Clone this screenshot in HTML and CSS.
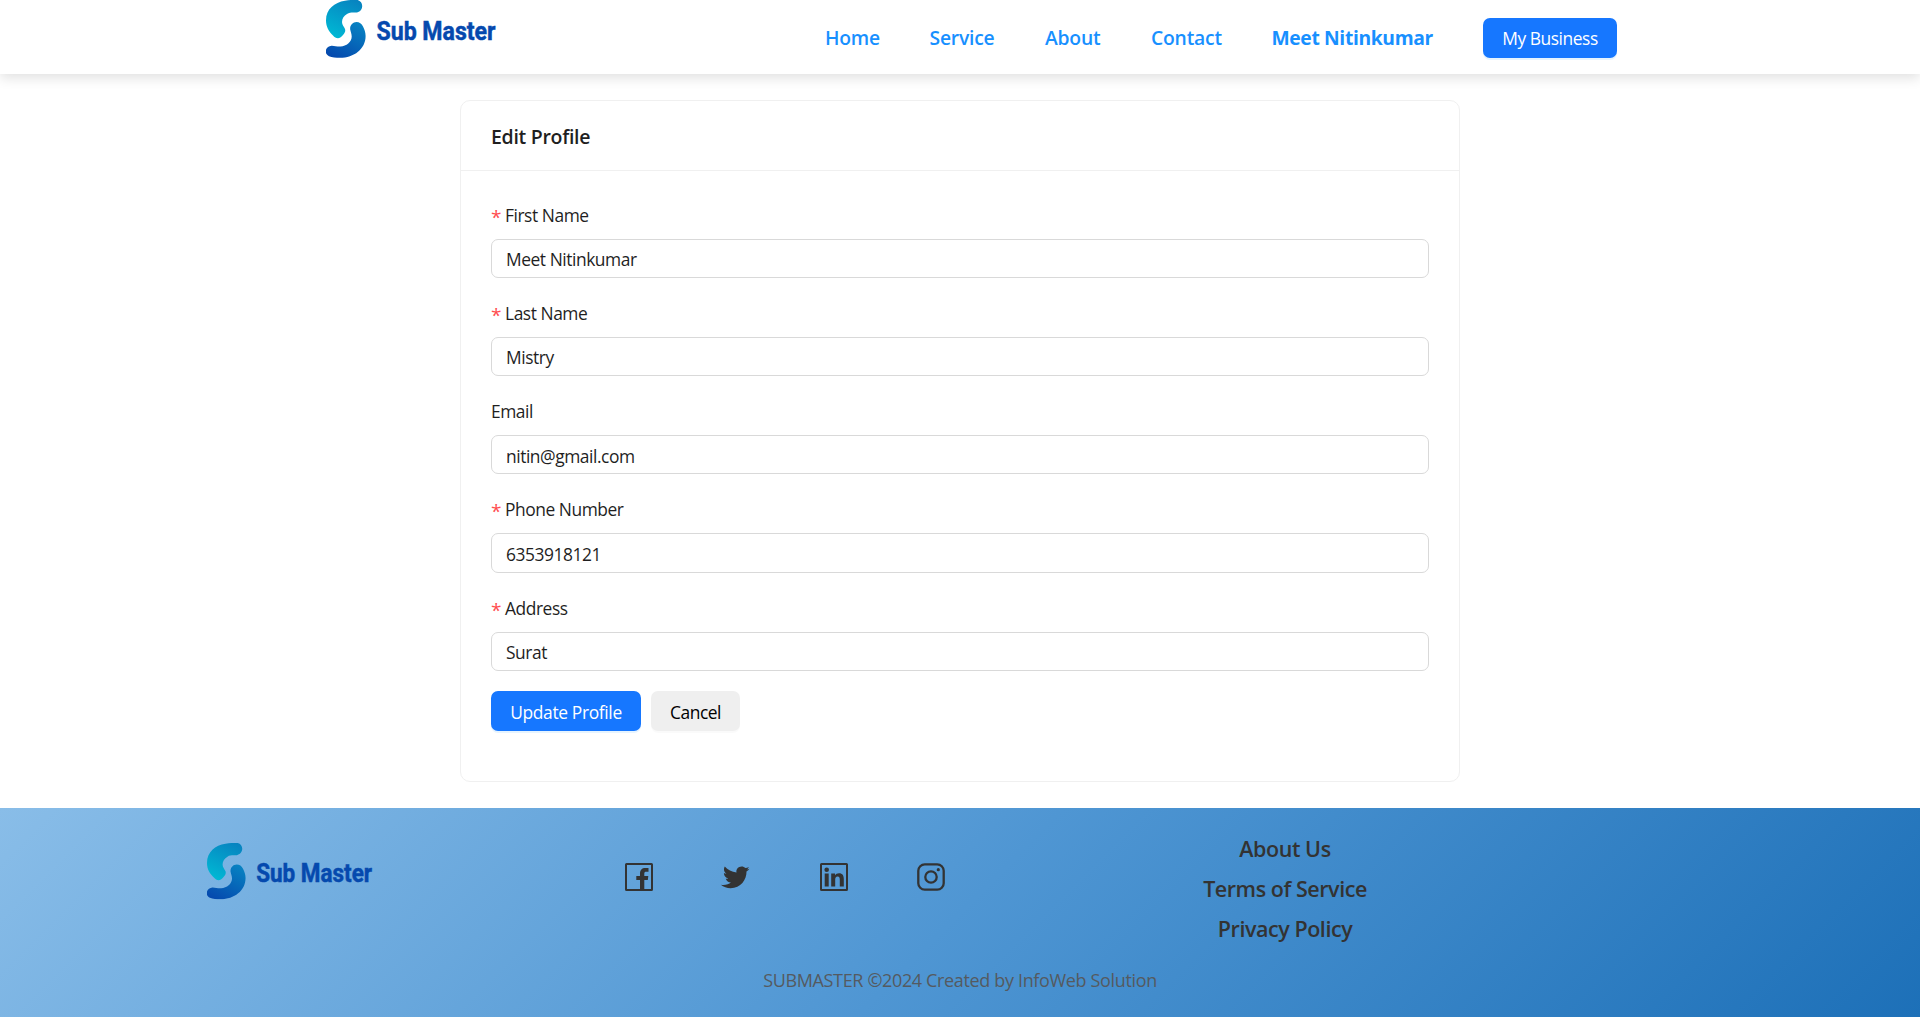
FILE: index.html
```
<!DOCTYPE html>
<html lang="en">
<head>
<meta charset="utf-8">
<title>Sub Master - Edit Profile</title>
<link rel="stylesheet" href="styles.css">
</head>
<body>
<svg class="defs" width="0" height="0" aria-hidden="true">
  <defs>
    <linearGradient id="logo-top" x1="0.75" y1="0" x2="0.3" y2="1"><stop offset="0" stop-color="#0784c0"/><stop offset="1" stop-color="#00b8d4"/></linearGradient>
    <linearGradient id="logo-bottom" x1="0.8" y1="0" x2="0.2" y2="1"><stop offset="0" stop-color="#0782c2"/><stop offset="1" stop-color="#0549ae"/></linearGradient>
    <symbol id="logo" viewBox="0 0 172 58">
      <path fill="url(#logo-top)" d="M19 .8C23 0 27-.2 30-.2 34-.2 36.200 3 36.200 6c0 3.500-2.500 6-5.500 6.500C27 12.800 24 12 21 14c-3 1.800-5 4.500-5 8 0 3 2 4.500 3 7 .8 2.500-.5 4-2 6-2 2.500-3.500 3.200-5 3.200-2 0-3.500-1-5-2.700C3 31.500 0 27 0 20.500 0 9 8.500 2.500 19 .8z"/>
      <path fill="url(#logo-bottom)" d="M30.500 22c3 0 5 1.500 6.500 4.500 1.500 3 2.600 6 2.600 9.500C39.600 49 28 57.800 14 57.800c-4 0-8-.3-11-1.600-2-1-3.300-2.700-3.300-4.700 0-3 2.500-5.600 5.800-5.800 3-.1 5.500 1 9 .8 6-.5 11-4.500 11.200-9.800 0-3-1-4.500-1.500-7.200-.5-4 2.500-7.500 6.300-7.500z"/>
      <text class="logo-text" x="50.500" y="40" textLength="119" lengthAdjust="spacingAndGlyphs">Sub Master</text>
    </symbol>
  </defs>
</svg>

<header class="header">
  <div class="header-inner">
    <svg class="header-logo" role="img" aria-label="Sub Master"><use href="#logo"/></svg>
    <nav class="nav">
      <a>Home</a><a>Service</a><a>About</a><a>Contact</a><a class="user">Meet Nitinkumar</a>
      <button class="btn btn-primary business">My Business</button>
    </nav>
  </div>
</header>

<main class="card">
  <h1 class="card-title">Edit Profile</h1>
  <form class="form">
    <div class="field"><label class="required">First Name</label><input type="text" value="Meet Nitinkumar"></div>
    <div class="field"><label class="required">Last Name</label><input type="text" value="Mistry"></div>
    <div class="field"><label>Email</label><input type="text" value="nitin@gmail.com"></div>
    <div class="field"><label class="required">Phone Number</label><input type="text" value="6353918121"></div>
    <div class="field"><label class="required">Address</label><input type="text" value="Surat"></div>
    <div class="actions">
      <button type="button" class="btn btn-primary update">Update Profile</button>
      <button type="button" class="btn btn-plain">Cancel</button>
    </div>
  </form>
</main>

<footer class="footer">
  <div class="footer-grid">
    <svg class="footer-logo" role="img" aria-label="Sub Master"><use href="#logo"/></svg>
    <div class="social">
      <svg viewBox="0 0 28 28"><rect x="1" y="1" width="26" height="26" rx=".5" fill="none" stroke="#333" stroke-width="2"/><path fill="#333" d="M15 26.500V17h-3.700v-4H15v-2.500C15 7 17 5 20.300 5H23.500v3.700h-2.200c-1.500 0-2 .6-2 2V13h4l-.5 4h-3.500v9.500z"/></svg>
      <svg viewBox="0 0 28 28"><path fill="#333" d="M27.500 5.800c-1 .5-1.900.7-2.900.8 1-.6 1.900-1.600 2.200-2.700-1 .6-2.200 1-3.300 1.200C22.500 4 21.100 3.400 19.600 3.400c-3.300 0-5.800 2.900-5.100 6C9.800 9.200 5.600 7 2.800 3.600c-1.600 2.700-.7 5.700 1.600 7.200-.9 0-1.800-.3-2.500-.7 0 2.700 1.800 4.900 4.300 5.500-.8.200-1.500.2-2.400.1.700 2.200 2.700 3.700 5.100 3.800-2.200 1.900-5.800 3-10.100 2.300 2.800 2.200 6.100 3.400 9.700 3.400 10.300 0 16.200-8.600 16-16.700 1.300-.7 2.200-1.600 3-2.700z"/></svg>
      <svg viewBox="0 0 28 28"><rect x="1" y="1" width="26" height="26" rx=".5" fill="none" stroke="#333" stroke-width="2"/><circle cx="6.700" cy="6.700" r="2.300" fill="#333"/><path fill="#333" d="M4.700 10.500h4v13h-4zM11.200 10.500H15v1.800c.8-1.300 2.200-2.100 4-2.100 3.600 0 4.800 2.200 4.800 5.900v7.400h-4v-6.700c0-1.800-.3-3.200-2.200-3.200s-2.400 1.400-2.400 3.100v6.800h-4z"/></svg>
      <svg viewBox="0 0 28 28" fill="none" stroke="#333" stroke-width="2.300"><rect x="1.300" y="1.300" width="25.400" height="25.400" rx="6.500"/><circle cx="14" cy="14" r="5.700"/><circle cx="21.300" cy="6.700" r="1.600" fill="#333" stroke="none"/></svg>
    </div>
    <div class="links"><a>About Us</a><a>Terms of Service</a><a>Privacy Policy</a></div>
  </div>
  <p class="copyright">SUBMASTER ©2024 Created by InfoWeb Solution</p>
</footer>
</body>
</html>
```
FILE: styles.css
```
* { box-sizing: border-box; }

body {
  margin: 0;
  min-height: 1017px;
  display: flex;
  flex-direction: column;
  background: #fff;
  color: #1f1f1f;
  font: 17.4px/1.5 "Open Sans", "Noto Sans", sans-serif;
  letter-spacing: -0.45px;
}

.defs { position: absolute; }

.logo-text {
  font: 700 26px Roboto, sans-serif;
  letter-spacing: 0;
  fill: #0549ae;
  stroke: #0549ae;
  stroke-width: 0.5px;
}

.header {
  height: 74px;
  flex: none;
  background: #fff;
  box-shadow: 0 4px 12px rgba(0, 0, 0, 0.12);
}

.header-inner {
  width: 1291px;
  height: 74px;
  margin: 0 auto 0 326px;
  display: flex;
  justify-content: space-between;
}

.header-logo { width: 172px; height: 58px; overflow: visible; }

.nav {
  display: grid;
  grid-template-columns: 54.5px 65.5px 56px 70.5px 161.5px 134px;
  column-gap: 50px;
  align-items: center;
  height: 76px;
}

.nav a {
  color: #1890ff;
  font-size: 19.3px;
  font-weight: 600;
  letter-spacing: -0.2px;
  white-space: nowrap;
}

.nav .user { font-weight: 700; letter-spacing: -0.36px; }

.btn {
  height: 40px;
  padding: 2px 0 0;
  border: 0;
  border-radius: 7px;
  font: inherit;
  letter-spacing: -0.45px;
  white-space: nowrap;
}

.business { padding-top: 0; }

.btn-primary {
  background: #1677ff;
  color: #fff;
  box-shadow: 0 2px 0 rgba(5, 145, 255, 0.1);
}

.btn-plain {
  width: 89px;
  background: #efefef;
  color: #000;
  box-shadow: 0 2px 0 rgba(0, 0, 0, 0.02);
}

.card {
  width: 1000px;
  height: 682px;
  margin: 26px auto;
  flex: none;
  border: 1px solid #f0f0f0;
  border-radius: 10px;
}

.card-title {
  height: 70px;
  margin: 0;
  padding: 0 30px;
  border-bottom: 1px solid #f0f0f0;
  font-size: 19.5px;
  font-weight: 600;
  line-height: 72px;
  letter-spacing: -0.3px;
}

.form { padding: 28.8px 30px 0; }

.field {
  height: 98.2px;
  display: flex;
  flex-direction: column;
  gap: 7px;
}

.field label { height: 32px; line-height: 31px; }

.required::before {
  content: "*";
  display: inline-block;
  width: 14px;
  height: 20px;
  color: #ff4d4f;
  font-size: 19px;
  line-height: 24px;
  vertical-align: -2px;
}

.field input {
  width: 100%;
  height: 39.2px;
  padding: 1.5px 14px 0;
  border: 1px solid #d9d9d9;
  border-radius: 7px;
  background: #fff;
  color: inherit;
  font: inherit;
  letter-spacing: inherit;
}

.actions { display: flex; gap: 10px; }
.update { width: 150px; letter-spacing: -0.35px; }

.footer {
  flex: 1;
  background: linear-gradient(135deg, #89bde8 0%, #4f96d3 50%, #1d70b8 100%);
}

.footer-grid {
  display: grid;
  grid-template-columns: 418px 306px 340px;
  padding: 21px 0 0 207px;
  height: 145px;
}

.footer-grid > .links { margin-left: 184px; }

.footer-logo { width: 167.5px; height: 56.5px; margin-top: 14px; overflow: visible; }

.social {
  width: 320px;
  padding-top: 34px;
  display: flex;
  justify-content: space-between;
}

.social svg { width: 28px; height: 28px; overflow: visible; }

.links {
  width: 340px;
  display: flex;
  flex-direction: column;
  align-items: center;
  color: #333;
  font-size: 21.5px;
  font-weight: 600;
  line-height: 40px;
  letter-spacing: -0.45px;
}

.copyright {
  margin: 14px 0 0;
  color: #555a60;
  font-size: 18px;
  letter-spacing: -0.35px;
  text-align: center;
}
```
